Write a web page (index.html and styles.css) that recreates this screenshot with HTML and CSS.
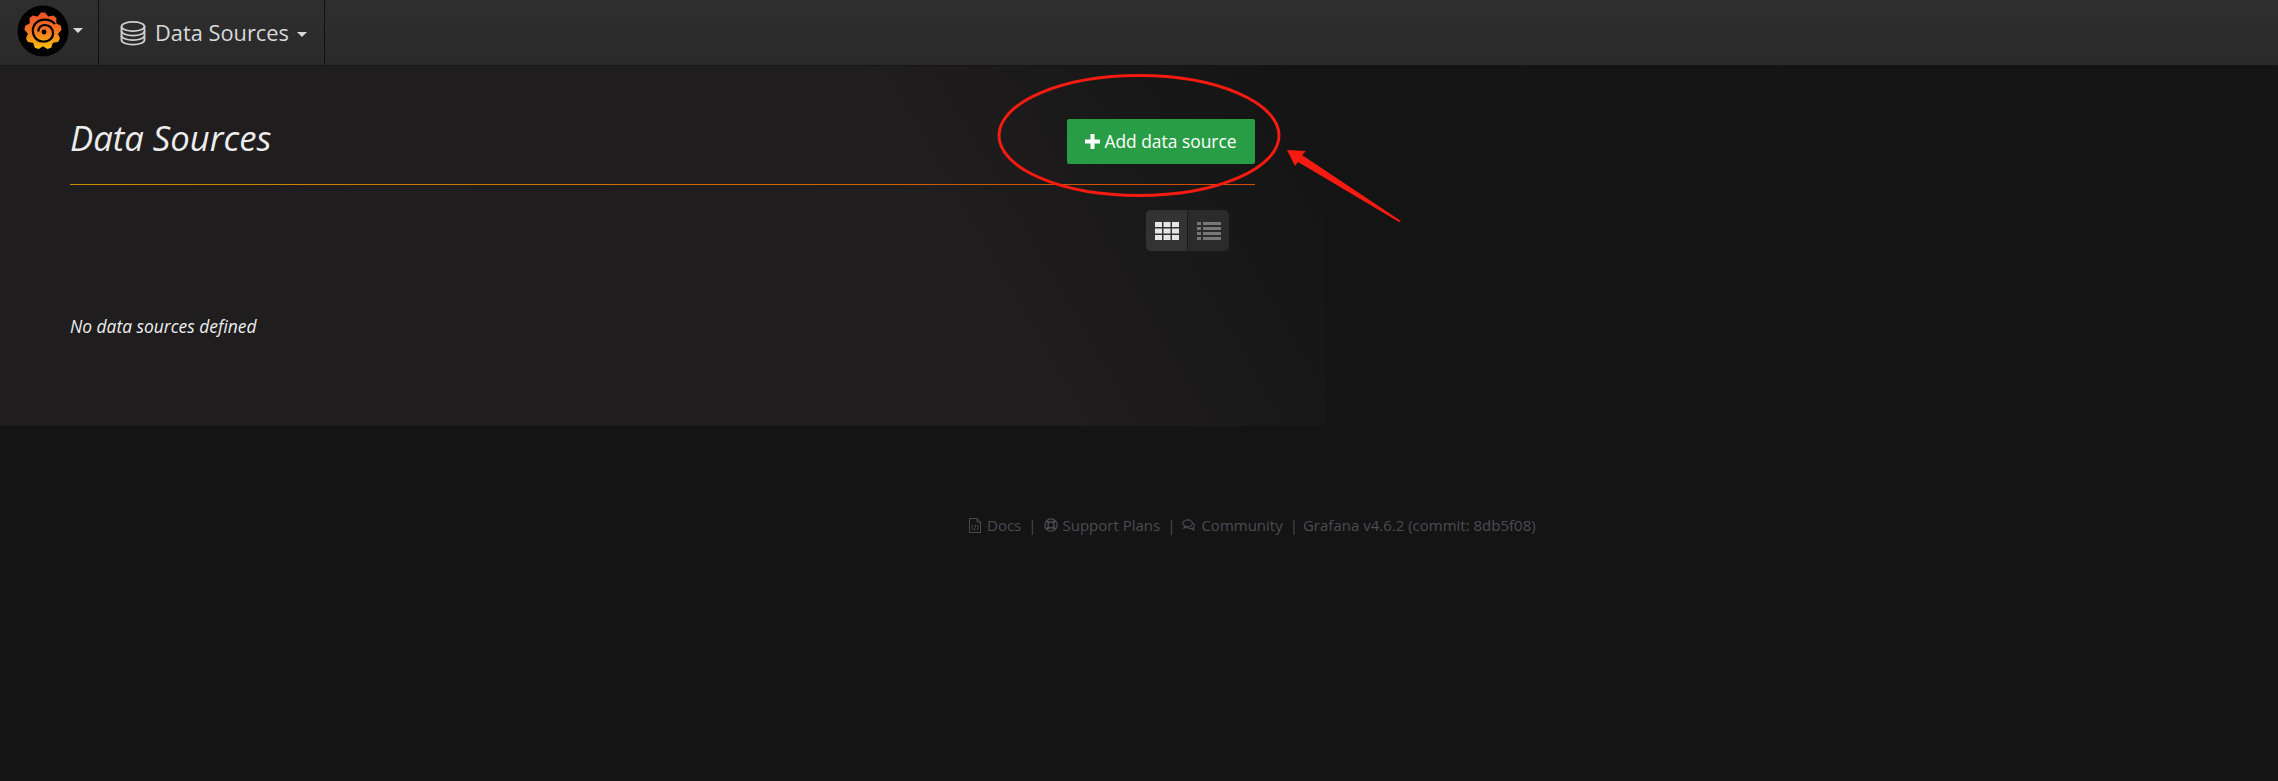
FILE: index.html
```html
<!DOCTYPE html>
<html lang="en">
<head>
<meta charset="utf-8">
<title>Data Sources</title>
<link rel="stylesheet" href="styles.css">
</head>
<body>
<nav class="navbar">
  <a class="nav-logo">
    <svg class="logo" viewBox="0 0 52 52" width="52" height="52">
      <defs>
        <linearGradient id="fire" x1="0" y1="0" x2="0" y2="1">
          <stop offset="0" stop-color="#ee4a2c"/>
          <stop offset="0.5" stop-color="#f4761f"/>
          <stop offset="1" stop-color="#fcc60c"/>
        </linearGradient>
        <path id="tooth" d="M-6-13.500 L-2-18.500 L2-18.500 L6-13.500Z"/>
        <clipPath id="gear">
          <circle cx="0" cy="0" r="15.500"/>
          <use href="#tooth" transform="rotate(0)"/>
          <use href="#tooth" transform="rotate(40)"/>
          <use href="#tooth" transform="rotate(80)"/>
          <use href="#tooth" transform="rotate(120)"/>
          <use href="#tooth" transform="rotate(160)"/>
          <use href="#tooth" transform="rotate(200)"/>
          <use href="#tooth" transform="rotate(240)"/>
          <use href="#tooth" transform="rotate(280)"/>
          <use href="#tooth" transform="rotate(320)"/>
        </clipPath>
      </defs>
      <circle cx="26" cy="26" r="25.500" fill="#000"/>
      <g transform="translate(26 26)">
        <rect x="-20" y="-20" width="40" height="40" fill="url(#fire)" clip-path="url(#gear)"/>
        <path d="M12-7 C7-12.500 -3-13 -8-7 C-13 0 -9 10 0 10.500 C6 11 10 7 10 2.500 C10-2 7-6 2-6 C-2.500-6 -5-3 -4.500 0.500" fill="none" stroke="#000" stroke-width="2.200"/>
        <circle cx="1" cy="1" r="2.400" fill="#000"/>
      </g>
    </svg>
    <span class="caret caret-logo"></span>
  </a>
  <a class="nav-section">
    <svg class="db-icon" viewBox="0 0 26 26" width="26" height="26">
      <g fill="none" stroke="#cfd0d1" stroke-width="1.800">
        <ellipse cx="13" cy="6.500" rx="11.500" ry="4.600"/>
        <path d="M1.500 6.500V20c0 2.500 5 4.600 11.500 4.600S24.500 22.500 24.500 20V6.500"/>
        <path d="M1.500 11c0 2.500 5 4.600 11.500 4.600S24.500 13.500 24.500 11"/>
        <path d="M1.500 15.500c0 2.500 5 4.600 11.500 4.600s11.500-2.100 11.500-4.600"/>
      </g>
    </svg>
    <span class="nav-title">Data Sources</span>
    <span class="caret caret-section"></span>
  </a>
</nav>

<main class="page-container">
  <header class="page-header">
    <h1 class="page-title">Data Sources</h1>
    <a class="btn-add">
      <svg class="plus" viewBox="0 0 15 15" width="15" height="15"><path d="M5.500 0h4v5.500H15v4H9.500V15h-4V9.500H0v-4h5.500z" fill="#fff"/></svg>
      Add data source
    </a>
  </header>
  <div class="toolbar">
    <div class="layout-toggle">
      <span class="toggle-btn active">
        <svg viewBox="0 0 24 18" width="24" height="18" fill="#e6e6e6">
          <rect x="0" y="0" width="7" height="5"/><rect x="8.500" y="0" width="7" height="5"/><rect x="17" y="0" width="7" height="5"/>
          <rect x="0" y="6.500" width="7" height="5"/><rect x="8.500" y="6.500" width="7" height="5"/><rect x="17" y="6.500" width="7" height="5"/>
          <rect x="0" y="13" width="7" height="5"/><rect x="8.500" y="13" width="7" height="5"/><rect x="17" y="13" width="7" height="5"/>
        </svg>
      </span>
      <span class="toggle-btn">
        <svg viewBox="0 0 24 18" width="24" height="18" fill="#777">
          <rect x="0" y="0" width="4" height="3"/><rect x="6" y="0" width="18" height="3"/>
          <rect x="0" y="5" width="4" height="3"/><rect x="6" y="5" width="18" height="3"/>
          <rect x="0" y="10" width="4" height="3"/><rect x="6" y="10" width="18" height="3"/>
          <rect x="0" y="15" width="4" height="3"/><rect x="6" y="15" width="18" height="3"/>
        </svg>
      </span>
    </div>
  </div>
  <p class="empty">No data sources defined</p>
</main>

<footer class="footer">
  <svg class="f-icon icon-docs" viewBox="0 0 12 15" width="12" height="15"><g fill="none" stroke="#4a4c52" stroke-width="1"><path d="M.5.500h7.500l3.500 3.500v10.500H.5z"/><path d="M8 .5v3.500h3.500"/><path d="M4 7 2.500 9.500 4 12M8 7l1.500 2.500L8 12M6.800 6.500 5.200 12.500"/></g></svg>
  <span>Docs</span><span class="sep">|</span>
  <svg class="f-icon" viewBox="0 0 14 14" width="14" height="14"><g fill="none" stroke="#4a4c52"><circle cx="7" cy="7" r="6.200" stroke-width="1.300"/><circle cx="7" cy="7" r="3" stroke-width="1.300"/><path d="M2.600 2.600 4.900 4.900M11.400 2.600 9.100 4.900M2.600 11.400l2.300-2.300M11.400 11.400 9.100 9.100" stroke-width="2.200"/></g></svg>
  <span>Support Plans</span><span class="sep">|</span>
  <svg class="f-icon" viewBox="0 0 15 13" width="14" height="12"><g fill="none" stroke="#4a4c52" stroke-width="1.200"><ellipse cx="6" cy="4.700" rx="5.200" ry="3.800"/><path d="M3 7.800 2 10l3-1.400"/><path d="M11.800 4.500c2 1.400 2.100 3.700.2 5l.8 2.200-3-1.500c-1.500.1-3-.2-4-1"/></g></svg>
  <span>Community</span><span class="sep">|</span>
  <span class="version">Grafana v4.6.2 (commit: 8db5f08)</span>
</footer>

<svg class="annotation" viewBox="0 0 2278 781" width="2278" height="781">
  <ellipse cx="1139" cy="135.500" rx="140" ry="60" fill="none" stroke="#f61b10" stroke-width="3"/>
  <path d="M1287 150 1306 151 1302 155 1401 221 1399 222 1298 162 1295 166z" fill="#f61b10"/>
</svg>
</body>
</html>
```
FILE: styles.css
```css
* { box-sizing: border-box; }
html, body { margin: 0; height: 100%; }
body {
  position: relative;
  width: 2278px;
  height: 781px;
  overflow: hidden;
  background: #141414;
  color: #d8d9da;
  font-family: "Open Sans", "Liberation Sans", sans-serif;
}
.navbar {
  display: flex;
  align-items: stretch;
  height: 66px;
  background: linear-gradient(#2e2e2e, #2a2a2a);
  border-bottom: 1px solid #141414;
}
.nav-logo {
  display: flex;
  align-items: center;
  width: 99px;
  padding: 0 0 0 17px;
  border-right: 1px solid #111;
}
.logo { display: block; flex: none; margin-bottom: 3px; }
.caret {
  display: block;
  width: 0;
  height: 0;
  border-left: 5px solid transparent;
  border-right: 5px solid transparent;
  border-top: 5px solid #d8d9da;
}
.caret-logo { margin: 0 0 4px 4px; }
.nav-section {
  display: flex;
  align-items: center;
  width: 226px;
  padding-left: 21px;
  border-right: 1px solid #111;
}
.db-icon { display: block; flex: none; margin-right: 9px; }
.nav-title { font-size: 21.800px; color: #d8d9da; line-height: 1; }
.caret-section { margin: 4px 0 0 8px; }

.page-container {
  width: 1325px;
  height: 360px;
  padding: 0 70px;
  background: linear-gradient(60deg, #1f1d1e 70%, #141414 98%);
}
.page-header {
  display: flex;
  align-items: flex-start;
  justify-content: space-between;
  width: 1185px;
  height: 119px;
  padding-top: 53px;
  border-bottom: 1px solid;
  border-image: linear-gradient(90deg, #c89000, #d44a00) 1;
}
.page-title {
  margin: -3px 0 0;
  font-size: 34.700px;
  font-weight: 400;
  font-style: italic;
  line-height: 44px;
  color: #ececec;
}
.btn-add {
  display: flex;
  align-items: center;
  justify-content: center;
  gap: 4px;
  width: 188px;
  height: 45px;
  padding-bottom: 1px;
  background: #299c46;
  border-radius: 2px;
  color: #fff;
  font-size: 17.400px;
}
.plus { display: block; flex: none; }
.toolbar {
  display: flex;
  justify-content: flex-end;
  width: 1159px;
  padding-top: 25px;
}
.layout-toggle {
  display: flex;
  height: 41px;
  border-radius: 5px;
  overflow: hidden;
  background: #2b2b2b;
}
.toggle-btn {
  display: flex;
  align-items: center;
  justify-content: center;
  width: 41px;
}
.toggle-btn.active {
  width: 42px;
  background: #333;
  border-right: 1px solid #1b1b1b;
}
.empty {
  margin: 63px 0 0;
  font-size: 17.400px;
  line-height: 24px;
  font-style: italic;
  color: #eee;
}
.footer {
  display: flex;
  align-items: center;
  gap: 5px;
  padding: 89px 0 0 969px;
  font-size: 15px;
  line-height: 20px;
  color: #4a4c52;
}
.f-icon { display: block; flex: none; }
.icon-docs { margin-right: 1px; }
.sep { margin: 0 2px; }
.version { margin-left: -2px; }
.annotation {
  position: absolute;
  left: 0;
  top: 0;
  pointer-events: none;
}
```
